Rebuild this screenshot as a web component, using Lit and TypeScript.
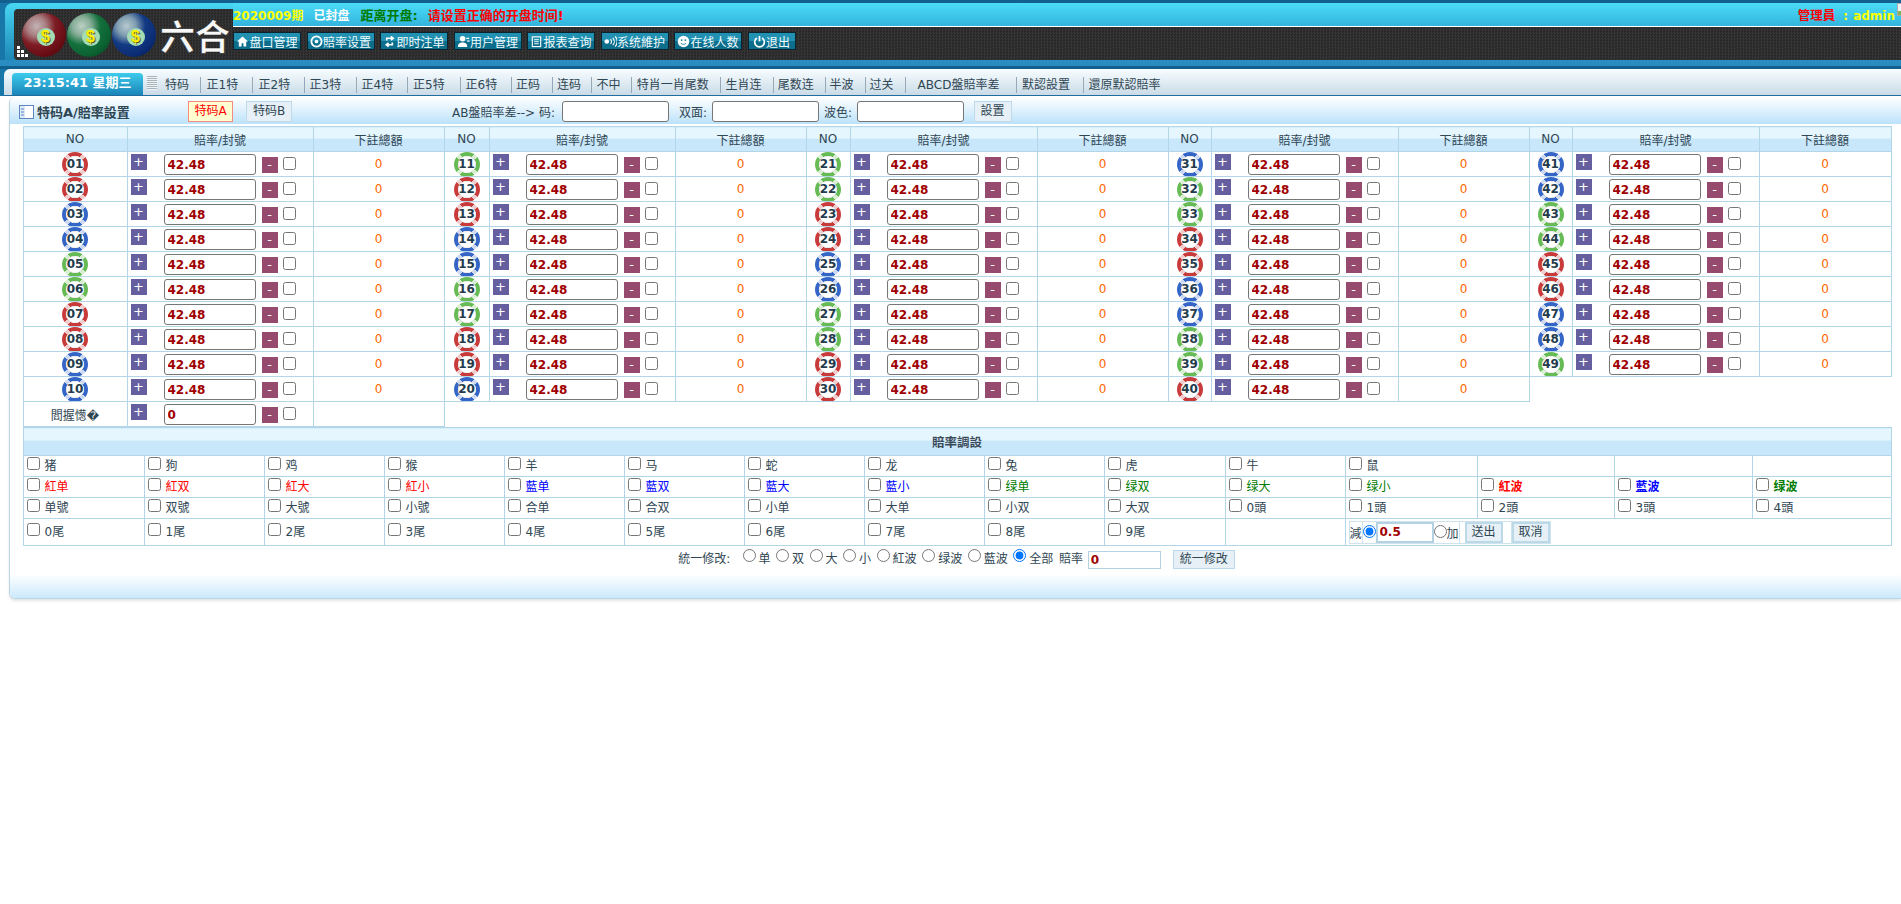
import { LitElement, html, css, svg } from "lit";
import { customElement } from "lit/decorators.js";

const RED = [1,2,7,8,12,13,18,19,23,24,29,30,34,35,40,45,46];
const BLUE = [3,4,9,10,14,15,20,25,26,31,36,37,41,42,47,48];
const colorOf = (n: number) => RED.includes(n) ? "red" : BLUE.includes(n) ? "blue" : "green";
const pad = (n: number) => String(n).padStart(2, "0");

const ic = (inner: unknown) => html`<svg class="ic" viewBox="0 0 14 14">${inner}</svg>`;
const MENU = [
  ["盘口管理", ic(svg`<path d="M7 1.5 1 7h2v5.5h3V9h2v3.5h3V7h2z" fill="#fff"/>`)],
  ["賠率设置", ic(svg`<circle cx="7" cy="7" r="5.5" fill="none" stroke="#fff" stroke-width="2"/><circle cx="7" cy="7" r="2" fill="#fff"/>`)],
  ["即时注单", ic(svg`<path d="M4 6V3.5h6M8.5 1.5 11 3.5 8.5 5.5M10 8v2.5H4.5M6 8.500 3.500 10.500 6 12.500" fill="none" stroke="#fff" stroke-width="1.800"/>`)],
  ["用户管理", ic(svg`<circle cx="6" cy="4" r="3" fill="#fff"/><path d="M1 13c0-4 2-5 5-5s5 1 5 5z" fill="#fff"/><path d="M10 3h3v1.200h-3zM11 6h2.500v1.200H11z" fill="#fff"/>`)],
  ["报表查询", ic(svg`<rect x="2.500" y="2" width="9" height="10.500" fill="none" stroke="#fff" stroke-width="1.200"/><path d="M4.500 5h5M4.500 7.200h5M4.500 9.400h5" stroke="#fff"/>`)],
  ["系统維护", ic(svg`<circle cx="3" cy="7" r="2.500" fill="#fff"/><path d="M7 4.500a3.500 3.500 0 0 1 0 5M9.500 3a6 6 0 0 1 0 8M12 1.500a8 8 0 0 1 0 11" fill="none" stroke="#fff" stroke-width="1.200"/>`)],
  ["在线人数", ic(svg`<circle cx="7" cy="7" r="6.200" fill="#fff"/><circle cx="5" cy="5.500" r="1" fill="#1b7d9c"/><circle cx="9" cy="5.500" r="1" fill="#1b7d9c"/><path d="M4 8.500c1.500 2.200 4.500 2.200 6 0" fill="none" stroke="#1b7d9c"/>`)],
  ["退出", ic(svg`<path d="M4.200 3.200a5.200 5.200 0 1 0 5.600 0" fill="none" stroke="#fff" stroke-width="1.800"/><path d="M7 1v6" stroke="#fff" stroke-width="1.800"/>`)],
] as const;

const TABS: [string, number, number][] = [
  ["特码", 42.6, 8], ["正1特", 52, 6], ["正2特", 52, 6], ["正3特", 52, 5], ["正4特", 51.5, 5], ["正5特", 52.5, 5], ["正6特", 51.5, 5],
  ["正码", 40.8, 4], ["连码", 39.6, 4], ["不中", 39.2, 4], ["特肖一肖尾数", 89.8, 5], ["生肖连", 52.3, 4], ["尾数连", 51.8, 4], ["半波", 40, 4],
  ["过关", 40, 4], ["ABCD盤賠率差", 111.5, 12], ["默認設置", 66.5, 5], ["還原默認賠率", 118, 5],
];

const ANIMALS = ["猪","狗","鸡","猴","羊","马","蛇","龙","兔","虎","牛","鼠"];
const COLORS: [string, string][] = [
  ["紅单","r"],["紅双","r"],["紅大","r"],["紅小","r"],["藍单","b"],["藍双","b"],["藍大","b"],["藍小","b"],
  ["绿单","g"],["绿双","g"],["绿大","g"],["绿小","g"],["紅波","r s"],["藍波","b s"],["绿波","g s"],
];
const ROW3 = ["单號","双號","大號","小號","合单","合双","小单","大单","小双","大双","0頭","1頭","2頭","3頭","4頭"];
const TAILS = Array.from({ length: 10 }, (_, i) => `${i}尾`);
const W1 = [104,186,131,45,186,131,44,187,131,43,187,131,43,187,132];
const W2 = [121,120,120,120,120,120,120,120,120,121,120,132,137,138,139];

@customElement("app-root")
export class AppRoot extends LitElement {
  static styles = css`
    :host { display:block; width:1901px; min-height:904px; background:#fff; position:relative; overflow:hidden;
      font:12px "DejaVu Sans","Noto Sans CJK SC",sans-serif; color:#2f4653; }
    .hdr { background:#1677a8; border-top:3px solid #13608f; }
    .hgrid { display:grid; grid-template-columns:233px 1fr; }
    .brand { margin-left:5px; padding:6px 0 0 9px; height:51px; border-radius:8px 0 0 0;
      background:linear-gradient(#47d6f3,#1f86b6); }
    .tex { background:conic-gradient(#353535 25%,#272727 0 50%,#353535 0 75%,#272727 0) 0 0/3px 3px; }
    .logo { height:51px; box-sizing:border-box; border-radius:4px 0 0 4px; display:flex; align-items:center; padding-left:8px; gap:1px; position:relative; }
    .lb { width:44px; height:44px; border-radius:50%; display:flex; align-items:center; justify-content:center; margin-top:1px; }
    .lb.a { background:radial-gradient(circle at 33% 30%,#c2b4b4 0,#a98083 22%,#7e1c24 44%,#6a0d14 68%,#3f0408 100%); }
    .lb.b { background:radial-gradient(circle at 33% 30%,#bcd0c4 0,#86ad97 22%,#14703d 44%,#0b6232 68%,#05381b 100%); }
    .lb.c { background:radial-gradient(circle at 33% 30%,#b8cace 0,#7f9db0 22%,#123a83 44%,#0b2d76 68%,#041544 100%); }
    .lb span { width:18px; height:18px; margin:3px 0 0 3px; border-radius:50%; background:#a4dcb4; color:#ffee00; font:bold 16px/18px "Liberation Sans",sans-serif; text-align:center; text-shadow:1px 1px 0 #5a5a20; }
    .lt { margin-left:3px; color:#f8f8f8; font:700 35px/36px "Noto Sans CJK SC",sans-serif; white-space:nowrap;
      -webkit-text-stroke:.5px #222; }
    .pix { position:absolute; left:3px; bottom:2px; }
    .info { height:23px; display:flex; align-items:center; font-weight:bold; background:linear-gradient(#4bdcf8,#33b4dd); border-bottom:1px solid #fff; white-space:nowrap; padding-right:6px; }
    .info .y { color:#ffff00; } .info .w { color:#fff; margin-left:10px; } .info .g { color:#007a00; margin-left:11px; font-size:13px; }
    .info .r { color:#f00; margin-left:10px; font-size:13px; }
    .admin { margin-left:auto; color:#f00; font-size:12.500px; }
    .admin b { color:#ff0; margin-left:8px; font-size:12px; }
    .admin i { font-style:normal; margin-left:5px; }
    .menu { height:33px; display:flex; align-items:flex-start; gap:5.500px; padding-top:5px; box-sizing:border-box; }
    .mb { width:68px; height:18px; box-sizing:border-box; border:1px solid #0a2430; color:#f0fcff; display:flex; align-items:center; justify-content:center; white-space:nowrap; background:linear-gradient(#2290b0 0 50%,#0d6e8c 50% 100%); }
    .mb.last { width:48px; }
    .ic { width:13px; height:13px; flex:none; }
    .band { height:6px; background:#2a8dc2; border-bottom:3px solid #12608e; }
    .tabs { margin-left:4px; height:26px; display:flex; border-radius:6px 0 0 0; background:linear-gradient(#f7fdff,#cadbe7); border-bottom:1px solid #1f6e9f; }
    .clock { margin:4px 0 0 8px; width:131px; height:22px; border-radius:4px 4px 0 0; box-sizing:border-box; color:#fff; font-weight:bold; font-size:13px; line-height:20px; text-align:center; white-space:nowrap; background:linear-gradient(#3ccbec,#1c85b9); }
    .grip { width:10px; height:14px; margin:7px 0 0 4px; background:repeating-linear-gradient(#aab4bc 0 1px,#eef3f6 1px 2px); }
    .tab { box-sizing:border-box; height:16px; margin-top:8px; line-height:16px; white-space:nowrap; border-left:1px solid #97a9b6; }
    .tab.first { border-left:none; }
    .panel { margin:1px 0 0 9px; border-left:1px solid #b8d6e6; border-bottom:1px solid #b5d8ea; border-radius:6px 0 0 6px; box-shadow:0 2px 3px #e4e4e4; height:502px; box-sizing:border-box; position:relative; background:#fff; }
    .phead { height:27px; box-sizing:border-box; padding-top:2px; display:flex; align-items:center; white-space:nowrap; background:linear-gradient(#fff,#bce2fa); border-radius:6px 0 0 0; position:relative; }
    .ptitle { display:flex; align-items:center; font-weight:bold; font-size:13px; margin-left:9px; width:169px; gap:3px; }
    .ptitle svg { width:15px; height:14px; }
    .sw { box-sizing:border-box; width:45px; height:21px; line-height:19px; text-align:center; }
    .sw.on { background:#ffffd2; border:1px solid #f58b80; color:#f00; }
    .sw.off { background:#e6f0f6; border:1px solid #bcdaea; margin-left:13px; width:46px; }
    .fl { margin-left:160px; padding-right:2.400px; }
    .ti { box-sizing:border-box; width:107px; height:21px; background:#fff; border:1px solid #767676; border-radius:3px; margin:0 5px; padding:0; }
    .ti.gap { margin-right:9.500px; }
    .btn { box-sizing:border-box; background:#e6f0f6; border:1px solid #bcdaea; height:21px; width:38px; margin-left:4.500px; line-height:19px; text-align:center; }
    .wrap { padding:2px 0 0 12.500px; width:1868px; position:relative; z-index:1; }
    table { border-collapse:collapse; table-layout:fixed; width:1868px; }
    td,th { border:1px solid #b2d5e7; padding:0; font-weight:normal; overflow:hidden; white-space:nowrap; }
    .t1 tr { height:25px; }
    .hd { background:linear-gradient(#e6f6fe 0 45%,#c9e7fa 45% 100%); text-align:center; }
    .c { text-align:center; }
    .none { border:none; }
    .ball { width:26px; height:25px; margin:-1px auto; display:flex; align-items:center; justify-content:center; border-radius:50%; font-weight:bold; font-size:12px; color:#233b4c; text-shadow:0 0 2px #fff,0 0 2px #fff; }
    .ball.red { background:radial-gradient(closest-side,#fff 0 60%,#ddd 68%,transparent 72%),repeating-conic-gradient(from 56deg,#c93b3b 0 68deg,#f0cccc 68deg 90deg); }
    .ball.blue { background:radial-gradient(closest-side,#fff 0 60%,#ddd 68%,transparent 72%),repeating-conic-gradient(from 56deg,#3566c7 0 68deg,#cdd9f2 68deg 90deg); }
    .ball.green { background:radial-gradient(closest-side,#fff 0 60%,#ddd 68%,transparent 72%),repeating-conic-gradient(from 56deg,#67bb55 0 68deg,#d8efd2 68deg 90deg); }
    .odd { display:flex; align-items:flex-start; height:24px; padding-left:3px; }
    .plus,.minus { width:16px; height:16px; color:#fff; font-size:13px; line-height:15px; text-align:center; flex:none; }
    .plus { background:#665f9f; margin-top:2px; }
    .minus { background:#964a6e; margin:5px 0 0 6px; }
    .oi { box-sizing:border-box; width:92px; height:21px; margin:2px 0 0 17px; border:1px solid #767676; border-radius:3px; padding:0 3px; font:bold 12px "DejaVu Sans",sans-serif; color:#a00000; background:#fff; flex:none; }
    .odd input[type=checkbox] { margin:5px 0 0 5px; flex:none; }
    .zero { color:#f60; }
    .t2 tr { height:21px; }
    .t2 tr.tall { height:27px; }
    .t2 td { padding-left:2px; }
    .t2 td.bt { padding:0; height:27px; font-weight:bold; text-align:center; color:#3b4a58; font-size:12.500px; }
    .t2 input[type=checkbox] { margin:0 5px 0 1px; vertical-align:top; }
    .t2 td.lab { line-height:19px; vertical-align:top; padding-top:1px; }
    .t2 .tall td.lab { padding-top:4px; }
    .r { color:#f00; } .b { color:#00f; } .g { color:#007a00; } .s { font-weight:bold; }
    .form { display:flex; align-items:stretch; height:21px; width:max-content; margin:0 0 0 1px; border:1px solid #cfe3ee; }
    .form > * { border-right:1px solid #cfe3ee; flex:none; }
    .form span { display:flex; align-items:center; }
    .form input[type=radio] { margin:3px 0 0 0; width:13px; height:13px; }
    .fi { box-sizing:border-box; width:58px; height:21px; border:2px solid #b4d2e2; font:bold 12px "DejaVu Sans",sans-serif; color:#a00000; padding:0 2px; }
    .fb { width:38px; background:#e6f0f6; border:2px solid #bcd9e8; box-sizing:border-box; line-height:17px; text-align:center; }
    .fb.one { margin-left:5px; }
    .fs { width:8px; }
    .unify { width:1868px; text-align:center; height:28px; padding-top:3px; box-sizing:border-box; white-space:nowrap; }
    .unify input[type=radio] { margin:0 3px 0 5.500px; vertical-align:1px; }
    .ul { margin-right:3px; }
    .ur { margin-right:2px; }
    .ui { box-sizing:border-box; width:73px; height:18px; border:1px solid #b4d2e2; font:bold 12px "DejaVu Sans",sans-serif; color:#a00000; padding:0 2px; vertical-align:middle; margin:0 8px 0 1px; }
    .ub { display:inline-block; width:62px; height:19px; background:#e6f0f6; border:1px solid #bcd9e8; box-sizing:border-box; line-height:17px; vertical-align:middle; margin-left:4px; }
    .pfoot { position:absolute; left:0; right:0; bottom:0; height:24px; background:linear-gradient(#fff,#cbe9fc); border-radius:0 0 0 6px; z-index:0; }
    .broken { position:absolute; top:3px; right:0; width:4px; height:13px; background:linear-gradient(#eef3f8 0 60%,#7fb45a 60%); border:1px solid #aaa; border-right:none; box-sizing:border-box; }
  `;

  private grp(n: number) {
    return html`<td><div class="ball ${colorOf(n)}">${pad(n)}</div></td>
      ${this.odd("42.48")}
      <td class="c zero">0</td>`;
  }
  private odd(v: string) {
    return html`<td><div class="odd"><div class="plus">+</div><input class="oi" .value=${v}><div class="minus">-</div><input type="checkbox"></div></td>`;
  }
  private chk(t: string, cls = "") {
    return html`<td class="lab"><input type="checkbox"><span class=${cls}>${t}</span></td>`;
  }

  render() {
    const rows = Array.from({ length: 10 }, (_, r) => r);
    return html`
      <div class="hdr">
        <div class="hgrid">
          <div class="brand">
            <div class="logo tex">
              <div class="lb a"><span>$</span></div><div class="lb b"><span>$</span></div><div class="lb c"><span>$</span></div>
              <div class="lt">六合</div>
              <svg class="pix" width="12" height="12" viewBox="0 0 12 12" fill="#fff"><rect y="0" width="3" height="3"/><rect y="4" width="3" height="3"/><rect x="4" y="4" width="3" height="3"/><rect y="8" width="3" height="3"/><rect x="4" y="8" width="3" height="3"/><rect x="8" y="8" width="3" height="3"/></svg>
            </div>
          </div>
          <div>
            <div class="info">
              <span class="y">2020009期</span><span class="w">已封盘</span><span class="g">距离开盘:</span><span class="r">请设置正确的开盘时间!</span>
              <span class="admin">管理員<b>:<i>admin</i></b></span>
            </div>
            <div class="menu tex">
              ${MENU.map(([t, i], k) => html`<div class="mb ${k === 7 ? "last" : ""}">${i}${t}</div>`)}
            </div>
          </div>
        </div>
        <div class="band"></div>
        <div class="tabs">
          <div class="clock">23:15:41 星期三</div>
          <div class="grip"></div>
          ${TABS.map(([t, w, p], k) => html`<div class="tab ${k === 0 ? "first" : ""}" style="width:${w}px;padding-left:${p}px">${t}</div>`)}
        </div>
      </div>
      <div class="panel">
        <div class="pfoot"></div>
        <div class="phead">
          <div class="ptitle"><svg viewBox="0 0 15 14"><rect x=".5" y=".5" width="14" height="13" fill="#dbe9f8" stroke="#5f86c0"/><rect x="6" y="1" width="8" height="12" fill="#fff"/><path d="M2 4h3M2 7h3M2 10h3" stroke="#5f86c0"/></svg>特码A/賠率設置</div>
          <div class="sw on">特码A</div><div class="sw off">特码B</div>
          <span class="fl">AB盤賠率差--&gt; 码:</span><input class="ti gap">
          <span>双面:</span><input class="ti">
          <span>波色:</span><input class="ti">
          <div class="btn">設置</div>
        </div>
        <div class="wrap">
          <table class="t1">
            <colgroup>${W1.map((w) => html`<col style="width:${w}px">`)}</colgroup>
            <tr>${[0,1,2,3,4].map(() => html`<th class="hd">NO</th><th class="hd">賠率/封號</th><th class="hd">下註總額</th>`)}</tr>
            ${rows.map((r) => html`<tr>
              ${[0,1,2,3].map((g) => this.grp(g * 10 + r + 1))}
              ${r < 9 ? this.grp(41 + r) : html`<td class="none" colspan="3"></td>`}
            </tr>`)}
            <tr><td class="c">閻握憽�</td>${this.odd("0")}<td></td><td class="none" colspan="12"></td></tr>
          </table>
          <table class="t2">
            <colgroup>${W2.map((w) => html`<col style="width:${w}px">`)}</colgroup>
            <tr><td class="hd bt" colspan="15">賠率調設</td></tr>
            <tr>${ANIMALS.map((a) => this.chk(a))}<td></td><td></td><td></td></tr>
            <tr>${COLORS.map(([t, c]) => this.chk(t, c))}</tr>
            <tr>${ROW3.map((t) => this.chk(t))}</tr>
            <tr class="tall">${TAILS.map((t) => this.chk(t))}<td></td>
              <td colspan="4"><div class="form">
                <span>減</span><input type="radio" name="pm" checked><input class="fi" .value=${"0.5"}><input type="radio" name="pm"><span>加</span>
                <div class="fb one">送出</div><div class="fs"></div><div class="fb">取消</div>
              </div></td>
            </tr>
          </table>
          <div class="unify"><span class="ul">統一修改:</span> <input type="radio" name="u">单<input type="radio" name="u">双<input type="radio" name="u">大<input type="radio" name="u">小<input type="radio" name="u">紅波<input type="radio" name="u">绿波<input type="radio" name="u">藍波<input type="radio" name="u" checked><span class="ur">全部</span> 賠率 <input class="ui" .value=${"0"}><span class="ub">統一修改</span></div>
        </div>
      </div>
      <div class="broken"></div>
    `;
  }
}
